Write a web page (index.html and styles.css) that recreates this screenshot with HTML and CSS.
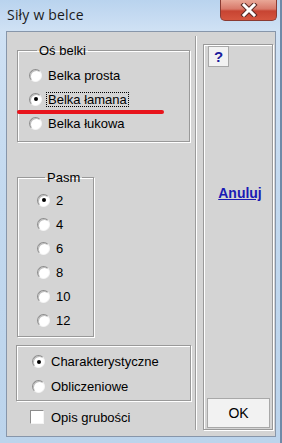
FILE: index.html
```html
<!DOCTYPE html>
<html lang="pl">

<head>
    <meta charset="UTF-8">
    <meta name="viewport" content="width=device-width, initial-scale=1.0">
    <title>Siły w belce</title>
    <link rel="stylesheet" href="styles.css">
</head>

<body>
    <div class="window">
        <!-- Pasek tytulu -->
        <div class="titlebar">
            <span class="title">Siły w belce</span>
            <button class="close" title="Zamknij">
                <svg width="20" height="14" viewBox="0 0 20 14">
                    <path d="M5 2 L15 12 M15 2 L5 12" stroke="#5a2a25" stroke-width="5" stroke-linecap="square" fill="none" />
                    <path d="M5 2 L15 12 M15 2 L5 12" stroke="#ffffff" stroke-width="3" stroke-linecap="square" fill="none" />
                </svg>
            </button>
        </div>

        <!-- Obszar okna -->
        <div class="client">
            <div class="left">
                <fieldset class="group group-axis">
                    <legend>Oś belki</legend>
                    <label class="opt"><span class="radio"></span><span class="lbl">Belka prosta</span></label>
                    <label class="opt"><span class="radio checked"></span><span class="lbl focus">Belka łamana</span></label>
                    <label class="opt"><span class="radio"></span><span class="lbl">Belka łukowa</span></label>
                </fieldset>
                <div class="marker"></div>

                <fieldset class="group group-pasm">
                    <legend>Pasm</legend>
                    <label class="opt"><span class="radio checked"></span><span class="lbl">2</span></label>
                    <label class="opt"><span class="radio"></span><span class="lbl">4</span></label>
                    <label class="opt"><span class="radio"></span><span class="lbl">6</span></label>
                    <label class="opt"><span class="radio"></span><span class="lbl">8</span></label>
                    <label class="opt"><span class="radio"></span><span class="lbl">10</span></label>
                    <label class="opt"><span class="radio"></span><span class="lbl">12</span></label>
                </fieldset>

                <fieldset class="group group-type">
                    <label class="opt"><span class="radio checked"></span><span class="lbl">Charakterystyczne</span></label>
                    <label class="opt"><span class="radio"></span><span class="lbl">Obliczeniowe</span></label>
                </fieldset>

                <label class="check-row"><span class="checkbox"></span><span class="lbl">Opis grubości</span></label>
            </div>

            <div class="divider"></div>

            <div class="side">
                <button class="help">?</button>
                <a href="#" class="cancel">Anuluj</a>
                <button class="ok">OK</button>
            </div>
        </div>
    </div>
</body>

</html>
```

FILE: styles.css
```css
body {
    margin: 0;
    padding: 0;
    font-family: "Liberation Sans", Arial, sans-serif;
    font-size: 13px;
    color: #000;
}

/* Ramka okna */
.window {
    position: relative;
    width: 282px;
    height: 443px;
    box-sizing: border-box;
    background: linear-gradient(to bottom, #b9d3ee 0px, #cfe1f4 30px, #c3d9ef 200px, #bcd4ec 443px);
    border-right: 2px solid #6f8aa8;
    display: flex;
    flex-direction: column;
}

.titlebar {
    height: 31px;
    display: flex;
    align-items: flex-start;
    flex-shrink: 0;
}

.title {
    font-family: "Open Sans", "Liberation Sans", sans-serif;
    font-size: 14px;
    letter-spacing: 0.2px;
    margin: 5px 0 0 7px;
    color: #1a1a1a;
}

.close {
    position: absolute;
    left: 220px;
    top: 0;
    width: 57px;
    height: 21px;
    padding: 0;
    border: 1px solid #8a3b33;
    border-top: none;
    border-radius: 0 0 5px 5px;
    background: linear-gradient(to bottom, #e9a797 0%, #d8796a 45%, #c74432 55%, #d5553f 100%);
    display: flex;
    align-items: center;
    justify-content: center;
}

/* Obszar roboczy */
.client {
    margin-left: 6px;
    width: 268px;
    height: 404px;
    background-color: #d4d4d4;
    border: 1px solid #8796aa;
    display: flex;
    position: relative;
}

.left {
    width: 187px;
    display: flex;
    flex-direction: column;
}

.group {
    margin: 0;
    border: 1px solid #999;
    box-shadow: inset 1px 1px 0 #fff, 1px 1px 0 #fff;
    padding: 0;
}

.group legend {
    padding: 0 2px;
    margin-left: 8px;
    line-height: 15px;
}

.group-axis {
    margin: 11px 0 0 10px;
    width: 173px;
    padding: 5px 0 6px 11px;
    box-sizing: border-box;
}

.group-pasm {
    margin: 28px 0 0 10px;
    width: 77px;
    padding: 3px 0 4px 19px;
    box-sizing: border-box;
}

.group-type {
    margin: 8px 0 0 9px;
    width: 175px;
    padding: 3px 0 1px 15px;
    box-sizing: border-box;
}

.group-type .opt {
    height: 25px;
}

.opt {
    display: flex;
    align-items: center;
    height: 24px;
}

.radio {
    width: 13px;
    height: 13px;
    box-sizing: border-box;
    border-radius: 50%;
    background: #fff;
    border: 1px solid;
    border-color: #8c8c8c #f4f4f4 #f4f4f4 #8c8c8c;
    box-shadow: inset 1px 1px 0 #bdbdbd;
    position: relative;
    flex-shrink: 0;
    margin-right: 4px;
}

.radio.checked::after {
    content: "";
    position: absolute;
    left: 3.5px;
    top: 3.5px;
    width: 4px;
    height: 4px;
    border-radius: 50%;
    background: #000;
}

.lbl {
    border: 1px solid transparent;
    padding: 0 1px;
    line-height: 13px;
}

.lbl.focus {
    border: 1px dotted #000;
}

/* Podkreslenie wybranej opcji */
.marker {
    position: absolute;
    left: 10px;
    top: 78px;
    width: 147px;
    height: 4px;
    border-radius: 2px;
    background: #e8141c;
}

.check-row {
    display: flex;
    align-items: center;
    height: 24px;
    margin: 4px 0 0 23px;
}

.checkbox {
    width: 14px;
    height: 14px;
    box-sizing: border-box;
    background: #fff;
    border: 1px solid;
    border-color: #8c8c8c #f4f4f4 #f4f4f4 #8c8c8c;
    margin-right: 5px;
}

.divider {
    width: 1px;
    margin: 4px 0 6px 1px;
    border-left: 1px solid #9c9c9c;
    background: #fff;
}

/* Panel z przyciskami */
.side {
    margin: 12px 0 0 6px;
    width: 70px;
    height: 386px;
    box-sizing: border-box;
    border: 1px solid #999;
    box-shadow: inset 1px 1px 0 #fff, 1px 1px 0 #fff;
    display: flex;
    flex-direction: column;
}

.help {
    align-self: flex-start;
    width: 21px;
    height: 21px;
    margin: 1px 0 0 4px;
    padding: 0;
    border: 1px solid #a8a8a8;
    background: #f2f2f2;
    color: #1c1c9c;
    font-family: "Liberation Sans", Arial, sans-serif;
    font-weight: bold;
    font-size: 15px;
    cursor: pointer;
}

.cancel {
    margin-top: 118px;
    padding-left: 4px;
    text-align: center;
    font-family: "Liberation Sans", Arial, sans-serif;
    font-weight: bold;
    font-size: 14px;
    color: #1a1ab4;
    text-decoration: underline;
}

.ok {
    margin: auto 0 1px 3px;
    width: 63px;
    height: 30px;
    border: 1px solid #a8a8a8;
    background: #f2f2f2;
    font-family: "Liberation Sans", Arial, sans-serif;
    font-size: 14px;
    color: #000;
    cursor: pointer;
}
```
